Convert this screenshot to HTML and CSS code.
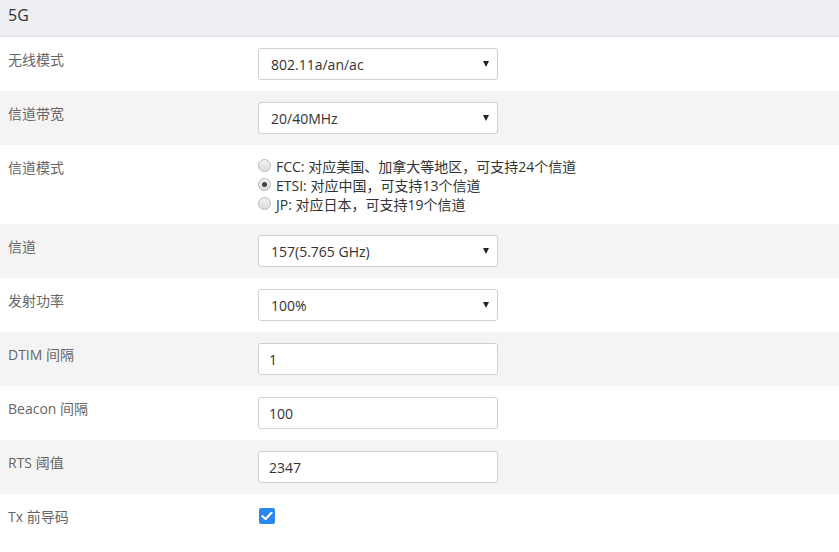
FILE: index.html
```html
<!DOCTYPE html>
<html>
<head>
<meta charset="utf-8">
<link rel="stylesheet" href="styles.css">
</head>
<body>
<div class="panel">
  <div class="head">5G</div>
  <div class="row">
    <div class="label">无线模式</div>
    <div class="ctrl"><div class="select"><span>802.11a/an/ac</span><span class="caret"></span></div></div>
  </div>
  <div class="row alt">
    <div class="label">信道带宽</div>
    <div class="ctrl"><div class="select"><span>20/40MHz</span><span class="caret"></span></div></div>
  </div>
  <div class="row radios-row">
    <div class="label">信道模式</div>
    <div class="ctrl radios">
      <label class="radio"><span class="dot"></span>FCC: 对应美国、加拿大等地区，可支持24个信道</label>
      <label class="radio"><span class="dot on"></span>ETSI: 对应中国，可支持13个信道</label>
      <label class="radio"><span class="dot"></span>JP: 对应日本，可支持19个信道</label>
    </div>
  </div>
  <div class="row alt">
    <div class="label">信道</div>
    <div class="ctrl"><div class="select"><span>157(5.765 GHz)</span><span class="caret"></span></div></div>
  </div>
  <div class="row">
    <div class="label">发射功率</div>
    <div class="ctrl"><div class="select"><span>100%</span><span class="caret"></span></div></div>
  </div>
  <div class="row alt">
    <div class="label">DTIM 间隔</div>
    <div class="ctrl"><div class="input">1</div></div>
  </div>
  <div class="row">
    <div class="label">Beacon 间隔</div>
    <div class="ctrl"><div class="input">100</div></div>
  </div>
  <div class="row alt">
    <div class="label">RTS 阈值</div>
    <div class="ctrl"><div class="input">2347</div></div>
  </div>
  <div class="row">
    <div class="label">Tx 前导码</div>
    <div class="ctrl"><span class="check"><svg width="12" height="10" viewBox="0 0 12 10"><path d="M1.5 5.2 L4.6 8 L10.5 1.8" fill="none" stroke="#fff" stroke-width="2.2" stroke-linecap="round" stroke-linejoin="round"/></svg></span></div>
  </div>
</div>
</body>
</html>
```

FILE: styles.css
```css
* { box-sizing: border-box; }
html, body { margin: 0; padding: 0; background: #fff; }
body {
  font-family: "Open Sans", "Noto Sans CJK SC", sans-serif;
  font-size: 14px;
  color: #333;
}
.panel { width: 839px; }
.head {
  height: 37px;
  background: #eeeff3;
  border-bottom: 1px solid #dfdfe5;
  padding: 4px 0 0 8px;
  font-size: 16px;
  line-height: 22px;
  color: #333;
}
.row {
  display: grid;
  grid-template-columns: 258px 1fr;
  height: 54px;
  background: #fff;
}
.row.alt { background: #f4f4f5; }
.row.radios-row { height: 79px; }
.label {
  padding: 13px 0 0 8px;
  line-height: 20px;
  color: #666;
  font-size: 14px;
}
.ctrl { padding-top: 11px; }
.select, .input {
  width: 240px;
  height: 32px;
  border: 1px solid #d0d0d0;
  border-radius: 3px;
  background: #fff;
  display: flex;
  align-items: center;
  padding: 0 12px;
  color: #333;
  font-size: 14px;
}
.select { justify-content: space-between; padding-right: 8px; }
.input { padding-left: 10px; }
.caret {
  width: 0; height: 0;
  border-left: 3.5px solid transparent;
  border-right: 3.5px solid transparent;
  border-top: 6px solid #222;
}
.radios { padding-top: 11px; display: flex; flex-direction: column; }
.radio {
  display: flex;
  align-items: center;
  height: 19px;
  font-size: 14px;
  color: #333;
  white-space: nowrap;
}
.dot {
  width: 13px; height: 13px;
  border-radius: 50%;
  border: 1px solid #b8b8b8;
  background: linear-gradient(#f2f2f2, #dcdcdc);
  margin: 0 5px 0 0;
  position: relative;
}
.dot.on::after {
  content: "";
  position: absolute;
  left: 3px; top: 3px;
  width: 5px; height: 5px;
  border-radius: 50%;
  background: #444;
}
.check {
  display: inline-flex;
  align-items: center;
  justify-content: center;
  width: 16px; height: 16px;
  margin: 3px 0 0 1px;
  background: #2d86ee;
  border-radius: 2px;
}
```
